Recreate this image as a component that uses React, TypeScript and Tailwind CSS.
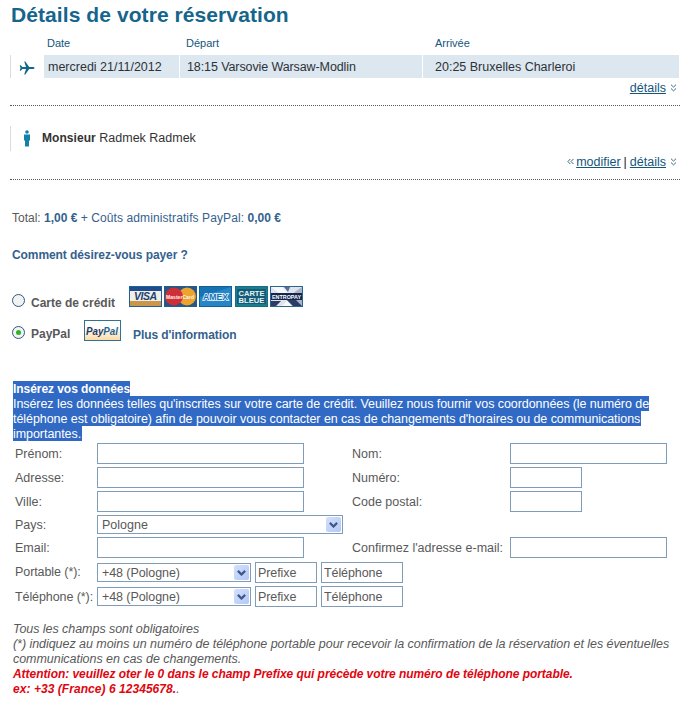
import { ReactNode, useState } from "react"
import clsx from "clsx"

// ####
// #### Types
// ####

type FieldProps = {
  label?: string
  className?: string
  defaultValue?: string
}

type SelectProps = {
  label: string
  value: string
  className?: string
}

type PaymentMethod = "card" | "paypal"

// ####
// #### Icons
// ####

const PlaneIcon = () => (
  <svg width="16" height="14" viewBox="0 0 16 14" fill="#10698c">
    <path d="M15.500 7c0-.6-.8-1-1.800-1H10.200L6.300.6H5.200L7 6H3.400L1.800 4.200H.7l.8 2.800-.8 2.800h1.100L3.400 8H7L5.200 13.400h1.100L10.200 8h3.500c1 0 1.800-.4 1.800-1z" />
  </svg>
)

const PersonIcon = () => (
  <svg width="8" height="17" viewBox="0 0 8 17" fill="#1580a8">
    <circle cx="4" cy="2" r="1.800" />
    <path d="M1 4.500h6v6H6V16.500H2v-6H1z" />
  </svg>
)

const ChevronsDown = () => (
  <svg width="7" height="8" viewBox="0 0 7 8" fill="none" stroke="#3a6f80">
    <path d="M1 .7l2.500 2.400L6 .7M1 4.500l2.500 2.400L6 4.500" />
  </svg>
)

const ChevronsLeft = () => (
  <svg width="7" height="7" viewBox="0 0 7 7" fill="none" stroke="#3a6f80">
    <path d="M3.300 1L.9 3.500l2.400 2.500M6.400 1L4 3.500l2.400 2.500" />
  </svg>
)

// ####
// #### Card logos
// ####

const VisaLogo = () => (
  <svg width="33" height="21" viewBox="0 0 33 21">
    <rect width="33" height="21" fill="#1f5f9c" />
    <rect x="1" y="1" width="31" height="4" fill="#1f4c8c" />
    <rect x="1" y="5" width="31" height="10" fill="#f1eee8" />
    <rect x="1" y="15" width="31" height="5" fill="#c9964a" />
    <text
      x="5"
      y="14"
      textLength="23"
      fontFamily="Liberation Sans, sans-serif"
      fontSize="10.500"
      fontWeight="bold"
      fontStyle="italic"
      fill="#233f74"
    >
      VISA
    </text>
  </svg>
)

const MasterCardLogo = () => (
  <svg width="33" height="21" viewBox="0 0 33 21">
    <rect width="33" height="21" fill="#1d5f8d" />
    <rect x="1" y="1" width="31" height="19" fill="#2c5585" />
    <circle cx="23" cy="10.500" r="9" fill="#eda32f" />
    <circle cx="10" cy="10.500" r="9" fill="#cf2f36" />
    <text
      x="2"
      y="13"
      textLength="28"
      lengthAdjust="spacingAndGlyphs"
      fontFamily="Liberation Sans, sans-serif"
      fontSize="6"
      fontWeight="bold"
      fill="#fff3e6"
    >
      MasterCard
    </text>
  </svg>
)

const AmexLogo = () => (
  <svg width="33" height="21" viewBox="0 0 33 21">
    <rect width="33" height="21" fill="#145f94" />
    <rect x="1" y="1" width="31" height="19" fill="#1672b5" />
    <path d="M1 20V11L32 1v19z" fill="#2686c6" />
    <text
      x="4"
      y="14"
      textLength="25"
      lengthAdjust="spacingAndGlyphs"
      fontFamily="Liberation Sans, sans-serif"
      fontSize="8.500"
      fontWeight="bold"
      fill="#1672b5"
      stroke="#e8f5fc"
      strokeWidth="1.600"
      paintOrder="stroke"
    >
      AMEX
    </text>
  </svg>
)

const CarteBleueLogo = () => (
  <svg width="33" height="21" viewBox="0 0 33 21">
    <rect width="33" height="21" fill="#1d6a8a" />
    <rect x="1" y="1" width="31" height="19" fill="#15808c" />
    <rect x="2" y="3" width="29" height="15" fill="#155b78" />
    <g
      fontFamily="Liberation Sans, sans-serif"
      fontSize="7"
      fontWeight="bold"
      fill="#e2f2f2"
    >
      <text x="3.500" y="9.800" textLength="26" lengthAdjust="spacingAndGlyphs">
        CARTE
      </text>
      <text x="3.500" y="17" textLength="26" lengthAdjust="spacingAndGlyphs">
        BLEUE
      </text>
    </g>
  </svg>
)

const EntropayLogo = () => (
  <svg width="33" height="21" viewBox="0 0 33 21">
    <rect width="33" height="21" fill="#2a668f" />
    <rect x="1" y="1" width="31" height="19" fill="#dfe4ec" />
    <path d="M1 1h11l6 6H9z" fill="#f7f8fa" />
    <path d="M14 1h6l-2 5z" fill="#5b6d94" />
    <path d="M32 1v19H22L17 14 26 5z" fill="#a9b3c6" />
    <path d="M1 20v-5h10l-5 5zM17 14h9l6 6h-9z" fill="#2b3c69" />
    <path d="M12 20l5-5 5 5z" fill="#f7f8fa" />
    <rect x="1" y="7" width="31" height="7" fill="#15264e" />
    <text
      x="2"
      y="12.500"
      textLength="29"
      lengthAdjust="spacingAndGlyphs"
      fontFamily="Liberation Sans, sans-serif"
      fontSize="5.500"
      fontWeight="bold"
      fill="#ffffff"
    >
      ENTROPAY
    </text>
  </svg>
)

const PayPalLogo = () => (
  <svg width="37" height="21" viewBox="0 0 37 21">
    <defs>
      <linearGradient id="paypal-bg" x1="0" y1="0" x2="0" y2="1">
        <stop offset="0.350" stopColor="#ffffff" />
        <stop offset="1" stopColor="#fbd9a3" />
      </linearGradient>
    </defs>
    <rect x="0.500" y="0.500" width="36" height="20" fill="url(#paypal-bg)" stroke="#2e7396" />
    <text
      x="2"
      y="14.500"
      textLength="32"
      lengthAdjust="spacingAndGlyphs"
      fontFamily="Liberation Sans, sans-serif"
      fontSize="10.500"
      fontWeight="bold"
      fontStyle="italic"
      fill="#1b3a68"
    >
      Pay
      <tspan fill="#2a6592">Pal</tspan>
    </text>
  </svg>
)

// ####
// #### Form controls
// ####

const Radio = ({
  checked,
  label,
  onChange,
}: {
  checked: boolean
  label: string
  onChange: () => void
}) => (
  <button
    type="button"
    role="radio"
    aria-checked={checked}
    aria-label={label}
    onClick={onChange}
    className="flex size-[13px] shrink-0 items-center justify-center rounded-full border border-[#31597f] bg-[#f1f3f2]"
  >
    {checked && <span className="size-[5px] rounded-full bg-[#35b02c]" />}
  </button>
)

const Field = ({ label, className, defaultValue }: FieldProps) => (
  <input
    type="text"
    aria-label={label}
    defaultValue={defaultValue}
    className={clsx(
      "block h-[21px] shrink-0 border border-[#7f9db9] bg-white px-[2px] text-[12.5px] text-[#595959] outline-none",
      className,
    )}
  />
)

const Select = ({ label, value, className }: SelectProps) => (
  <div className={clsx("relative h-[19px] shrink-0 border border-[#7f9db9]", className)}>
    <select
      aria-label={label}
      className="block h-[17px] w-full appearance-none bg-white pt-px pl-1 text-[12.5px] leading-[16px] outline-none"
    >
      <option>{value}</option>
    </select>
    <span className="pointer-events-none absolute top-px right-px flex h-[15px] w-[15px] items-center justify-center rounded-[2px] bg-linear-to-br from-[#d3e0fd] to-[#b3c8f5]">
      <svg width="9" height="6" viewBox="0 0 9 6" fill="none" stroke="#3f5686" strokeWidth="2.200">
        <path d="M.9 .9l3.600 3.600L8.100 .9" />
      </svg>
    </span>
  </div>
)

const Row = ({
  label,
  className,
  children,
}: {
  label: string
  className?: string
  children: ReactNode
}) => (
  <div className={clsx("flex", className)}>
    <label className="w-[82px] shrink-0 whitespace-nowrap">{label}</label>
    {children}
  </div>
)

const RightLabel = ({ children }: { children: ReactNode }) => (
  <label className="w-[158px] shrink-0 whitespace-nowrap">{children}</label>
)

const DetailsLink = ({ children }: { children: ReactNode }) => (
  <a href="#" className="text-[#15567c] underline">
    {children}
  </a>
)

// ####
// #### Sections
// ####

const Flight = () => (
  <section className="ml-[10px] w-[670px]">
    <div className="flex h-[24px] text-[11px] leading-[25px] text-[#15567c]">
      <span className="ml-[37px] w-[139px]">Date</span>
      <span className="w-[249px]">Départ</span>
      <span>Arrivée</span>
    </div>
    <div className="flex h-[23px] gap-px text-[12.5px] leading-[24px] whitespace-nowrap text-[#2d3238]">
      <div className="flex w-[33px] items-center border-l border-[#dcdcdc] pt-[3px] pl-[8px]">
        <PlaneIcon />
      </div>
      <div className="w-[135px] bg-[#dce7f0] pl-1">mercredi 21/11/2012</div>
      <div className="w-[242px] bg-[#dce7f0] pl-[7px] tracking-[-0.1px]">
        18:15 Varsovie Warsaw-Modlin
      </div>
      <div className="w-[256px] bg-[#dce7f0] pl-[12px]">20:25 Bruxelles Charleroi</div>
    </div>
    <div className="flex h-[27px] items-start justify-end gap-1 pt-[2px] pr-[3px] leading-4">
      <DetailsLink>détails</DetailsLink>
      <span className="pt-[4px]">
        <ChevronsDown />
      </span>
    </div>
    <div className="border-t border-dotted border-[#555]" />
  </section>
)

const Passenger = () => (
  <section className="ml-[10px] w-[670px] pt-[20px]">
    <div className="flex h-[25px] items-center border-l border-[#dcdcdc] pl-[12px] text-[#333]">
      <PersonIcon />
      <p className="ml-[11px]">
        <b className="text-[12px] tracking-[0.060px]">Monsieur</b> Radmek Radmek
      </p>
    </div>
    <div className="flex h-[28px] items-start justify-end pt-[3px] pr-[3px] leading-4 text-[#222]">
      <span className="mr-[2px] pt-[4px]">
        <ChevronsLeft />
      </span>
      <DetailsLink>modifier</DetailsLink>
      <span className="mx-[3px]">|</span>
      <DetailsLink>détails</DetailsLink>
      <span className="ml-1 pt-[4px]">
        <ChevronsDown />
      </span>
    </div>
    <div className="border-t border-dotted border-[#555]" />
  </section>
)

const Payment = () => {
  const [method, setMethod] = useState<PaymentMethod>("paypal")

  return (
    <section className="pl-3 text-[12px]">
      <p className="pt-[30px] leading-4 text-[#34618e]">
        <span className="text-[#595959]">Total:</span> <b>1,00 €</b>{" "}
        <span className="tracking-[0.100px]">+ Coûts administratifs PayPal:</span> <b>0,00 €</b>
      </p>
      <h2 className="pt-[21px] leading-4 font-bold tracking-[-0.080px] text-[#34618e]">
        Comment désirez-vous payer ?
      </h2>
      <div className="mt-[23px] flex h-[21px]">
        <div className="flex w-[117px] pt-[8px]">
          <Radio
            label="Carte de crédit"
            checked={method === "card"}
            onChange={() => setMethod("card")}
          />
          <span className="ml-[6px] leading-[18px] font-bold">Carte de crédit</span>
        </div>
        <div className="flex gap-[2.200px]">
          <VisaLogo />
          <MasterCardLogo />
          <AmexLogo />
          <CarteBleueLogo />
          <EntropayLogo />
        </div>
      </div>
      <div className="mt-[13px] flex h-[21px]">
        <div className="flex w-[72px] pt-[6px]">
          <Radio
            label="PayPal"
            checked={method === "paypal"}
            onChange={() => setMethod("paypal")}
          />
          <span className="ml-[6px] leading-[16px] font-bold">PayPal</span>
        </div>
        <PayPalLogo />
        <a
          href="#"
          className="ml-[12px] pt-[7px] leading-4 font-bold tracking-[-0.080px] text-[#34618e]"
        >
          Plus d'information
        </a>
      </div>
    </section>
  )
}

const PersonalData = () => (
  <section className="mt-[40px]">
    <div className="ml-[13px] leading-[16px] tracking-[-0.055px] whitespace-nowrap text-white">
      <p className="h-[15px] w-[117px] bg-[#316ac5] text-[12px] font-bold">Insérez vos données</p>
      <p className="h-[15px] w-[636px] bg-[#316ac5] tracking-[-0.065px]">
        Insérez les données telles qu'inscrites sur votre carte de crédit. Veuillez nous fournir vos
        coordonnées (le numéro de
      </p>
      <p className="h-[15px] w-[628px] bg-[#316ac5]">
        téléphone est obligatoire) afin de pouvoir vous contacter en cas de changements d'horaires ou
        de communications
      </p>
      <p className="h-[15px] w-[69px] bg-[#316ac5]">importantes.</p>
    </div>
    <form className="mt-[2px] pl-[15px]">
      <Row label="Prénom:" className="h-[21px] leading-[22px]">
        <Field label="Prénom" className="mr-12 w-[207px]" />
        <RightLabel>Nom:</RightLabel>
        <Field label="Nom" className="w-[157px]" />
      </Row>
      <Row label="Adresse:" className="mt-[3px] h-[21px] leading-[22px]">
        <Field label="Adresse" className="mr-12 w-[207px]" />
        <RightLabel>Numéro:</RightLabel>
        <Field label="Numéro" className="w-[72px]" />
      </Row>
      <Row label="Ville:" className="mt-[3px] h-[21px] leading-[22px]">
        <Field label="Ville" className="mr-12 w-[207px]" />
        <RightLabel>Code postal:</RightLabel>
        <Field label="Code postal" className="w-[72px]" />
      </Row>
      <Row label="Pays:" className="mt-[3px] h-[19px] leading-[20px]">
        <Select label="Pays" value="Pologne" className="w-[246px]" />
      </Row>
      <Row label="Email:" className="mt-[3px] h-[21px] leading-[22px]">
        <Field label="Email" className="mr-12 w-[207px]" />
        <RightLabel>Confirmez l'adresse e-mail:</RightLabel>
        <Field label="Confirmez l'adresse e-mail" className="w-[157px]" />
      </Row>
      <Row label="Portable (*):" className="mt-1 h-[21px] leading-[20px] tracking-[-0.080px]">
        <Select label="Indicatif portable" value="+48 (Pologne)" className="mt-px mr-1 w-[154px]" />
        <Field label="Préfixe portable" defaultValue="Prefixe" className="mr-1 w-[62px]" />
        <Field label="Portable" defaultValue="Téléphone" className="w-[82px]" />
      </Row>
      <Row label="Téléphone (*):" className="mt-[3px] h-[21px] leading-[22px] tracking-[-0.080px]">
        <Select label="Indicatif téléphone" value="+48 (Pologne)" className="mt-px mr-1 w-[154px]" />
        <Field label="Préfixe téléphone" defaultValue="Prefixe" className="mr-1 w-[62px]" />
        <Field label="Téléphone" defaultValue="Téléphone" className="w-[82px]" />
      </Row>
    </form>
    <div className="mt-[14px] ml-[13px] leading-[15px] tracking-[-0.050px] whitespace-nowrap italic">
      <p className="pt-px">Tous les champs sont obligatoires</p>
      <p>
        (*) indiquez au moins un numéro de téléphone portable pour recevoir la confirmation de la
        réservation et les éventuelles
      </p>
      <p>communications en cas de changements.</p>
      <div className="text-[12px]">
        <p className="font-bold text-[#e00510]">
          Attention: veuillez oter le 0 dans le champ Prefixe qui précède votre numéro de téléphone
          portable.
        </p>
        <p className="tracking-[0.050px]">
          <b className="text-[#e00510]">ex: +33 (France) 6 12345678.</b>.
        </p>
      </div>
    </div>
  </section>
)

// ####
// #### Page
// ####

const App = () => (
  <main className="h-[707px] w-[684px] overflow-hidden bg-white font-['Liberation_Sans',Arial,sans-serif] text-[12.5px] text-[#595959]">
    <h1 className="h-[31px] pl-[11px] text-[21px] leading-[29px] font-bold tracking-[0.080px] text-[#15658c]">
      Détails de votre réservation
    </h1>
    <Flight />
    <Passenger />
    <Payment />
    <PersonalData />
  </main>
)

export default App
